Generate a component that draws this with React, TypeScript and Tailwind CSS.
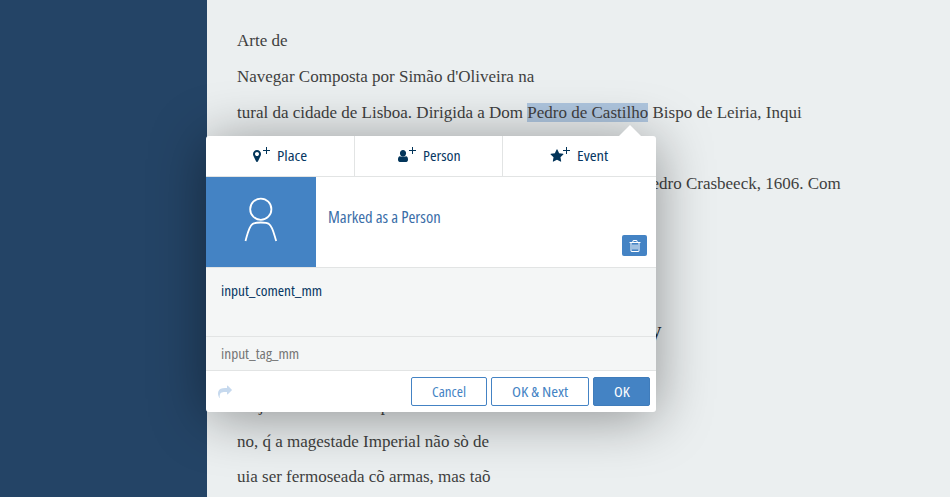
import { useLayoutEffect, useRef, useState } from "react";

const icons = {
  marker:
    "M1152 640q0-106-75-181t-181-75-181 75-75 181 75 181 181 75 181-75 75-181zm256 0q0 109-33 179l-364 774q-16 33-47.5 52t-67.5 19-67.5-19-46.5-52l-365-774q-33-70-33-179 0-212 150-362t362-150 362 150 150 362z",
  user:
    "M1536 1330q0 140-62 230t-150 90h-856q-88 0-150-90t-62-230q0-170 60-290t190-120q180 90 390 90t390-90q130 0 190 120t60 290zM1290 550q0 170-110 300t-284 130-284-130-110-300 110-290 284-120 284 120 110 290z",
  star:
    "M1728 647q0 22-26 48l-363 354 86 500q1 7 1 20 0 21-10.5 35.5t-30.5 14.5q-19 0-40-12l-449-236-449 236q-22 12-40 12-21 0-31.5-14.5t-10.5-35.5q0-6 2-20l86-500-364-354q-25-27-25-48 0-37 56-46l502-73 225-455q19-41 49-41t49 41l225 455 502 73q56 9 56 46z",
  trash:
    "M704 736v576q0 14-9 23t-23 9h-64q-14 0-23-9t-9-23v-576q0-14 9-23t23-9h64q14 0 23 9t9 23zm256 0v576q0 14-9 23t-23 9h-64q-14 0-23-9t-9-23v-576q0-14 9-23t23-9h64q14 0 23 9t9 23zm256 0v576q0 14-9 23t-23 9h-64q-14 0-23-9t-9-23v-576q0-14 9-23t23-9h64q14 0 23 9t9 23zm128 724v-948h-896v948q0 22 7 40.5t14.5 27 10.5 8.5h832q3 0 10.5-8.5t14.5-27 7-40.5zm-672-1076h448l-48-117q-7-9-17-11h-317q-10 2-17 11zm928 32v64q0 14-9 23t-23 9h-96v948q0 83-47 143.5t-113 60.5h-832q-66 0-113-58.5t-47-141.5v-952h-96q-14 0-23-9t-9-23v-64q0-14 9-23t23-9h309l70-167q15-37 54-63t79-26h320q40 0 79 26t54 63l70 167h309q14 0 23 9t9 23z",
  share:
    "M1792 640q0 26-19 45l-512 512q-19 19-45 19t-45-19-19-45v-256h-224q-98 0-175.5 6t-154 21.5-133 42.5-105.5 69.5-80 101-48.5 138.5-17.5 181q0 55 5 123 0 6 2.5 23.5t2.5 26.5q0 15-8.5 25t-23.5 10q-16 0-28-17-7-9-13-22t-13.5-30-10.5-24q-127-285-127-451 0-199 53-333 162-403 875-403h224v-256q0-26 19-45t45-19 45 19l512 512q19 19 19 45z",
};

function Icon({ name, className }: { name: keyof typeof icons; className: string }) {
  return (
    <svg viewBox="0 0 1792 1792" fill="currentColor" className={className}>
      <path d={icons[name]} />
    </svg>
  );
}

/** Sets a label in a condensed face, squeezed to the given width. */
function Narrow({ text, width, className = "" }: { text: string; width: number; className?: string }) {
  const ref = useRef<HTMLSpanElement>(null);
  const [scale, setScale] = useState(1);
  useLayoutEffect(() => {
    if (ref.current) setScale(width / ref.current.offsetWidth);
  }, [width]);
  return (
    <span className="block shrink-0 text-left" style={{ width }}>
      <span
        ref={ref}
        className={`inline-block origin-left whitespace-nowrap font-stretch-condensed ${className}`}
        style={{ transform: `scaleX(${scale})` }}
      >
        {text}
      </span>
    </span>
  );
}

function Tab({ icon, label, width, className }: { icon: keyof typeof icons; label: string; width: number; className: string }) {
  return (
    <button className={`flex h-10 items-center border-[#e2e4e4] text-[#073763] ${className}`}>
      <Icon name={icon} className="size-[14px] shrink-0 text-[#03355a]" />
      <svg viewBox="0 0 7 7" className="-ml-px mr-[7px] mb-[11px] size-[7px] shrink-0">
        <path d="M3.5 0v7M0 3.5h7" stroke="#03355a" strokeWidth="1" />
      </svg>
      <div className="pb-[3px]">
        <Narrow text={label} width={width} className="text-[15px]" />
      </div>
    </button>
  );
}

export default function App() {
  return (
    <div className="relative flex h-[497px] w-[950px] overflow-hidden bg-[#ebeff0]">
      <aside className="w-[207px] shrink-0 bg-[#244466]" />
      <main className="flex-1 overflow-hidden pt-[23px] pl-[30px] font-['Liberation_Serif',serif] text-[17px] leading-[36px] whitespace-nowrap text-[#3f3f3f]">
        <p>Arte de</p>
        <p>Navegar Composta por Simão d'Oliveira na</p>
        <p>
          tural da cidade de Lisboa. Dirigida a Dom <span className="bg-[#afc6df]">Pedro de Castilho</span> Bispo de
          Leiria, Inqui
        </p>
        <p className="mt-[35px] pl-[405px]">Pedro Crasbeeck, 1606. Com</p>
        <p className="mt-[110px] pl-[414px] text-[21px] text-[#222]">y</p>
        <div className="mt-[40px] flex">
          <span className="pl-[22px]">j</span>
          <span className="pl-[117px]">p</span>
        </div>
        <p className="h-[35px] leading-[35px]">no, q́ a magestade Imperial não sò de</p>
        <p>uia ser fermoseada cõ armas, mas taõ</p>
      </main>

      <section className="absolute top-[136px] left-[206px] w-[450px] rounded-[3px] bg-white font-['Open_Sans','Noto_Sans',sans-serif] shadow-[0_5px_55px_rgba(0,0,0,0.4)]">
        <svg viewBox="0 0 22 11" className="absolute -top-[11px] left-[413px] h-[11px] w-[22px]">
          <path d="M0 11L11 0L22 11Z" fill="#fff" />
        </svg>
        <nav className="flex h-[41px] border-b border-[#e2e4e4]">
          <Tab icon="marker" label="Place" width={30} className="w-[149px] border-r pl-[44px]" />
          <Tab icon="user" label="Person" width={38} className="w-[148px] border-r pl-[41px]" />
          <Tab icon="star" label="Event" width={31} className="w-[153px] pl-[47px]" />
        </nav>
        <div className="flex h-[91px] border-b border-[#e2e4e4]">
          <div className="flex h-[90px] w-[110px] items-center justify-center bg-[#4483c4]">
            <svg viewBox="0 0 34 46" className="mt-[-5px] h-[46px] w-[34px]" fill="none" stroke="#fff" strokeWidth="1.8">
              <circle cx="16.800" cy="12.200" r="10.600" />
              <path d="M1.500 44C4 35 5 29.500 8.500 27C11 25 22.500 25 25 27C28.500 29.500 29.500 35 32.200 44" />
            </svg>
          </div>
          <div className="flex flex-1 items-end justify-between pr-[9px] pb-[11px] pl-[12px] text-[#3a6ea8]">
            <div className="mb-[26px]">
              <Narrow text="Marked as a Person" width={113} className="text-[16.500px]" />
            </div>
            <button className="flex h-[21px] w-[25px] items-center justify-center rounded-[2px] bg-[#4483c4] text-white">
              <Icon name="trash" className="size-[14px]" />
            </button>
          </div>
        </div>
        <div className="h-[69px] border-b border-[#e2e4e4] bg-[#f4f6f6] pt-[10px] pl-[15px] text-[#073763]">
          <Narrow text="input_coment_mm" width={101} className="text-[15px]" />
        </div>
        <div className="flex h-[34px] items-center border-b border-[#e2e4e4] bg-[#f4f6f6] pb-[2px] pl-[15px] text-[#757575]">
          <Narrow text="input_tag_mm" width={78} className="text-[15px]" />
        </div>
        <footer className="flex h-[41px] items-center gap-1 pr-[6px] pl-[12px]">
          <Icon name="share" className="mr-auto size-[14px] text-[#c6d9ee]" />
          <button className="flex h-[29px] w-[76px] items-center justify-center rounded-[2px] border border-[#4483c4] pb-px text-[#4483c4]">
            <Narrow text="Cancel" width={34} className="text-[15px]" />
          </button>
          <button className="flex h-[29px] w-[98px] items-center justify-center rounded-[2px] border border-[#4483c4] pb-px text-[#4483c4]">
            <Narrow text="OK & Next" width={56} className="text-[15px]" />
          </button>
          <button className="flex h-[29px] w-[57px] items-center justify-center rounded-[2px] border border-[#3f7cbb] bg-[#4483c4] pb-px text-white">
            <Narrow text="OK" width={16} className="text-[15px]" />
          </button>
        </footer>
      </section>
    </div>
  );
}
